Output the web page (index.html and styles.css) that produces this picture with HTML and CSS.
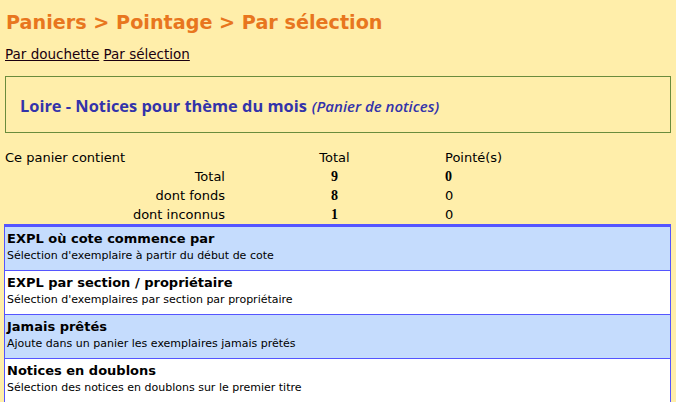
FILE: index.html
```html
<!DOCTYPE html>
<html lang="fr">
<head>
<meta charset="utf-8">
<title>Paniers &gt; Pointage &gt; Par sélection</title>
<link rel="stylesheet" href="styles.css">
</head>
<body>
<h1 class="title">Paniers &gt; Pointage &gt; Par sélection</h1>
<nav class="tabs"><a href="#">Par douchette</a> <a href="#">Par sélection</a></nav>
<div class="basket">
  <span class="basket-name">Loire - Notices pour thème du mois</span>
  <span class="basket-type">(Panier de notices)</span>
</div>
<div class="stats">
  <div class="c1 left">Ce panier contient</div><div class="c2">Total</div><div class="c3">Pointé(s)</div>
  <div class="c1">Total</div><div class="c2 num">9</div><div class="c3 num">0</div>
  <div class="c1">dont fonds</div><div class="c2 num">8</div><div class="c3">0</div>
  <div class="c1">dont inconnus</div><div class="c2 num">1</div><div class="c3">0</div>
</div>
<ul class="procs">
  <li class="proc odd"><div class="proc-title">EXPL où cote commence par</div><div class="proc-desc">Sélection d'exemplaire à partir du début de cote</div></li>
  <li class="proc"><div class="proc-title">EXPL par section / propriétaire</div><div class="proc-desc">Sélection d'exemplaires par section par propriétaire</div></li>
  <li class="proc odd"><div class="proc-title">Jamais prêtés</div><div class="proc-desc">Ajoute dans un panier les exemplaires jamais prêtés</div></li>
  <li class="proc"><div class="proc-title">Notices en doublons</div><div class="proc-desc">Sélection des notices en doublons sur le premier titre</div></li>
</ul>
</body>
</html>
```
FILE: styles.css
```css
html, body {
  margin: 0;
  padding: 0;
  background: #ffeeaa;
}
body {
  padding: 0 5px 0 4px;
  font-family: "DejaVu Sans", Verdana, sans-serif;
  font-size: 13px;
  color: #000;
}
.title {
  margin: 0;
  padding: 11px 0 0 2px;
  height: 33px;
  box-sizing: border-box;
  font-size: 19.2px;
  line-height: 23px;
  font-weight: bold;
  color: #e8761e;
}
.tabs {
  padding: 13px 0 0 1px;
  height: 31px;
  box-sizing: border-box;
  line-height: 17px;
  font-size: 13.5px;
}
.tabs a {
  color: #1a0010;
  text-decoration: underline;
}
.basket {
  margin: 12px 0 0 1px;
  height: 57px;
  box-sizing: border-box;
  border: 1px solid #6a8c3c;
  display: flex;
  align-items: center;
  gap: 5px;
  padding: 2px 0 0 14px;
  font-family: "Open Sans", "DejaVu Sans", sans-serif;
  color: #3333aa;
}
.basket-name {
  font-size: 16.4px;
  font-weight: bold;
}
.basket-type {
  font-size: 15px;
  font-style: italic;
  font-weight: 600;
}
.stats {
  margin-top: 15px;
  display: grid;
  grid-template-columns: 221px 219px 1fr;
  grid-auto-rows: 19px;
  align-items: center;
}
.c1 { text-align: right; padding-left: 1px; }
.c1.left { text-align: left; }
.c2 { text-align: center; }
.c3 { padding-left: 1px; }
.num {
  font-family: "Liberation Serif", "Times New Roman", serif;
  font-weight: bold;
  font-size: 14px;
}
.procs {
  list-style: none;
  margin: 0;
  padding: 0;
  border: 1px solid #5555ff;
  border-top-width: 3px;
  border-bottom: 0;
}
.proc {
  height: 44px;
  box-sizing: border-box;
  border-bottom: 1px solid #5555ff;
  padding: 3px 0 0 2px;
  background: #fff;
}
.proc.odd { background: #c5dcfd; }
.proc-title {
  font-weight: bold;
  font-size: 13px;
  line-height: 18px;
}
.proc-desc {
  font-size: 11px;
  line-height: 16px;
}
```
